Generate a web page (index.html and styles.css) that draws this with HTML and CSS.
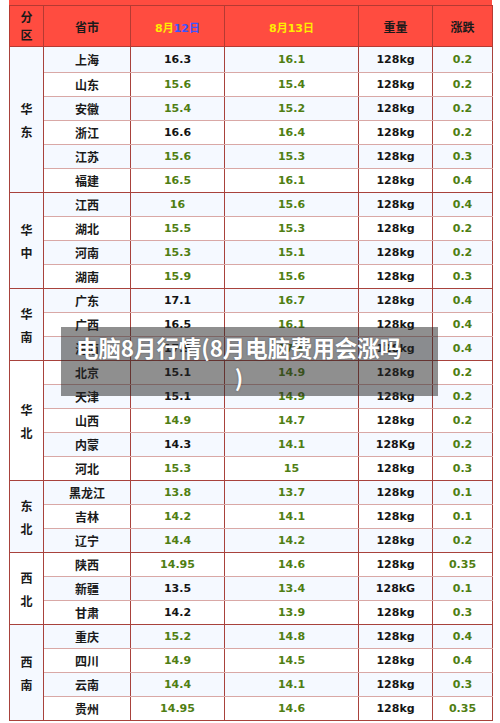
FILE: index.html
```html
<!DOCTYPE html>
<html lang="zh-CN">
<head>
  <meta charset="UTF-8">
  <meta name="viewport" content="width=device-width, initial-scale=1.0">
  <title>电脑8月行情</title>
  <link rel="stylesheet" href="styles.css">
</head>
<body>
  <div class="sheet">
    <div class="caption"><span>8月电脑价格行情</span></div>
    <table class="price-table">
      <colgroup>
        <col class="c-area">
        <col class="c-city">
        <col class="c-day1">
        <col class="c-day2">
        <col class="c-weight">
        <col class="c-change">
      </colgroup>
      <thead>
        <tr>
          <th><span class="stack">分区</span></th>
          <th>省市</th>
          <th><span class="yellow">8月</span><span class="blue">12日</span></th>
          <th><span class="yellow">8月13日</span></th>
          <th>重量</th>
          <th>涨跌</th>
        </tr>
      </thead>
      <tbody>
        <tr class="first">
          <td class="area" rowspan="6"><span class="stack">华东</span></td>
          <td class="city">上海</td><td class="dark">16.3</td><td>16.1</td><td class="dark">128kg</td><td>0.2</td>
        </tr>
        <tr><td class="city">山东</td><td>15.6</td><td>15.4</td><td class="dark">128kg</td><td>0.2</td></tr>
        <tr><td class="city">安徽</td><td>15.4</td><td>15.2</td><td class="dark">128kg</td><td>0.2</td></tr>
        <tr><td class="city">浙江</td><td class="dark">16.6</td><td>16.4</td><td class="dark">128kg</td><td>0.2</td></tr>
        <tr><td class="city">江苏</td><td>15.6</td><td>15.3</td><td class="dark">128kg</td><td>0.3</td></tr>
        <tr class="last"><td class="city">福建</td><td>16.5</td><td>16.1</td><td class="dark">128kg</td><td>0.4</td></tr>

        <tr>
          <td class="area" rowspan="4"><span class="stack">华中</span></td>
          <td class="city">江西</td><td>16</td><td>15.6</td><td class="dark">128kg</td><td>0.4</td>
        </tr>
        <tr><td class="city">湖北</td><td>15.5</td><td>15.3</td><td class="dark">128kg</td><td>0.2</td></tr>
        <tr><td class="city">河南</td><td>15.3</td><td>15.1</td><td class="dark">128kg</td><td>0.2</td></tr>
        <tr class="last"><td class="city">湖南</td><td>15.9</td><td>15.6</td><td class="dark">128kg</td><td>0.3</td></tr>

        <tr>
          <td class="area" rowspan="3"><span class="stack">华南</span></td>
          <td class="city">广东</td><td class="dark">17.1</td><td>16.7</td><td class="dark">128kg</td><td>0.4</td>
        </tr>
        <tr><td class="city">广西</td><td class="dark">16.5</td><td>16.1</td><td class="dark">128kg</td><td>0.4</td></tr>
        <tr class="last"><td class="city">海南</td><td class="dark">17.9</td><td>17.5</td><td class="dark">128kg</td><td>0.4</td></tr>

        <tr>
          <td class="area" rowspan="5"><span class="stack">华北</span></td>
          <td class="city">北京</td><td class="dark">15.1</td><td>14.9</td><td class="dark">128kg</td><td>0.2</td>
        </tr>
        <tr><td class="city">天津</td><td class="dark">15.1</td><td>14.9</td><td class="dark">128kg</td><td>0.2</td></tr>
        <tr><td class="city">山西</td><td>14.9</td><td>14.7</td><td class="dark">128kg</td><td>0.2</td></tr>
        <tr><td class="city">内蒙</td><td class="dark">14.3</td><td>14.1</td><td class="dark">128Kg</td><td>0.2</td></tr>
        <tr class="last"><td class="city">河北</td><td>15.3</td><td>15</td><td class="dark">128kg</td><td>0.3</td></tr>

        <tr>
          <td class="area" rowspan="3"><span class="stack">东北</span></td>
          <td class="city">黑龙江</td><td>13.8</td><td>13.7</td><td class="dark">128kg</td><td>0.1</td>
        </tr>
        <tr><td class="city">吉林</td><td>14.2</td><td>14.1</td><td class="dark">128kg</td><td>0.1</td></tr>
        <tr class="last"><td class="city">辽宁</td><td>14.4</td><td>14.2</td><td class="dark">128kg</td><td>0.2</td></tr>

        <tr>
          <td class="area" rowspan="3"><span class="stack">西北</span></td>
          <td class="city">陕西</td><td>14.95</td><td>14.6</td><td class="dark">128kg</td><td>0.35</td>
        </tr>
        <tr><td class="city">新疆</td><td class="dark">13.5</td><td>13.4</td><td class="dark">128kG</td><td>0.1</td></tr>
        <tr class="last"><td class="city">甘肃</td><td class="dark">14.2</td><td>13.9</td><td class="dark">128kg</td><td>0.3</td></tr>

        <tr>
          <td class="area" rowspan="4"><span class="stack">西南</span></td>
          <td class="city">重庆</td><td>15.2</td><td>14.8</td><td class="dark">128kg</td><td>0.4</td>
        </tr>
        <tr><td class="city">四川</td><td>14.9</td><td>14.5</td><td class="dark">128kg</td><td>0.4</td></tr>
        <tr><td class="city">云南</td><td>14.4</td><td>14.1</td><td class="dark">128kg</td><td>0.3</td></tr>
        <tr class="last"><td class="city">贵州</td><td>14.95</td><td>14.6</td><td class="dark">128kg</td><td>0.35</td></tr>
      </tbody>
    </table>

    <div class="title-banner">电脑8月行情(8月电脑费用会涨吗)</div>
  </div>
</body>
</html>
```

FILE: styles.css
```css
body {
  margin: 0;
  background-color: #fff;
  font-family: 'DejaVu Sans', 'Noto Sans CJK SC', sans-serif;
}

.sheet {
  position: relative;
  width: 500px;
  height: 723px;
  overflow: hidden;
}

.caption {
  height: 5px;
  margin-left: 9px;
  width: 483px;
  overflow: hidden;
  background-color: #ff4c40;
}

.caption span {
  display: block;
  margin-top: -14px;
  padding-left: 262px;
  font-size: 13px;
  line-height: 16px;
  font-weight: bold;
  color: #3a1a1a;
}

.price-table {
  margin-left: 9px;
  width: 483px;
  table-layout: fixed;
  border-collapse: collapse;
  font-size: 11px;
  font-weight: bold;
}

.c-area { width: 34px; }
.c-city { width: 87px; }
.c-day1 { width: 94px; }
.c-day2 { width: 134px; }
.c-weight { width: 74px; }
.c-change { width: 60px; }

.price-table th {
  height: 40px;
  padding: 0;
  background-color: #ff4c40;
  border: 1px solid #b53a32;
  color: #1a1a1a;
  font-size: 12px;
  font-family: 'Noto Sans CJK SC', 'DejaVu Sans', sans-serif;
}

.price-table th .yellow {
  color: #ffee00;
  font-family: 'DejaVu Sans', 'Noto Sans CJK SC', sans-serif;
  font-size: 11px;
}

.price-table th .blue {
  color: #3b55ff;
  font-family: 'DejaVu Sans', 'Noto Sans CJK SC', sans-serif;
  font-size: 11px;
}

.stack {
  display: inline-block;
  width: 1em;
  line-height: 18px;
  word-break: break-all;
}

.price-table td {
  height: 23px;
  padding: 0;
  text-align: center;
  color: #4f7e12;
  border-left: 1px solid #a8423c;
  border-right: 1px solid #a8423c;
  border-bottom: 1px solid #d9a8a6;
}

.price-table tr.first td {
  height: 25px;
}

.price-table tr.last td,
.price-table td.area {
  border-bottom: 1px solid #a8423c;
}

.price-table tbody tr:nth-child(odd) td {
  background-color: #f5f9ff;
}

.price-table tbody tr:nth-child(even) td {
  background-color: #fff;
}

.price-table td.area {
  background-color: #f5f9ff;
  color: #1a1a1a;
  font-size: 12px;
  font-family: 'Noto Sans CJK SC', sans-serif;
}

.price-table td.area .stack {
  line-height: 23px;
}

.price-table td.city {
  color: #1a1a1a;
  font-size: 12px;
  font-family: 'Noto Sans CJK SC', sans-serif;
}

.price-table td.dark {
  color: #141414;
}

.title-banner {
  position: absolute;
  left: 61px;
  top: 327px;
  width: 377px;
  height: 69px;
  box-sizing: border-box;
  padding: 5px 33px 0 12px;
  background-color: rgba(40, 40, 40, 0.52);
  color: #fff;
  font-family: 'Noto Sans CJK SC', sans-serif;
  font-size: 22.4px;
  font-weight: bold;
  line-height: 30px;
  text-align: center;
  line-break: anywhere;
  text-shadow: 0 0 2px rgba(0, 0, 0, 0.35);
}
```
